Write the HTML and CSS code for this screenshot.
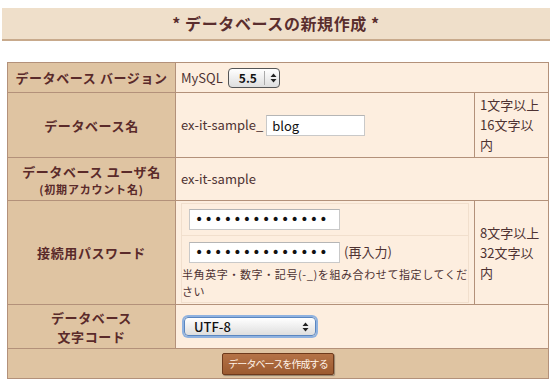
FILE: index.html
```html
<!DOCTYPE html>
<html lang="ja">
<head>
<meta charset="utf-8">
<link rel="stylesheet" href="styles.css">
</head>
<body>
<div class="page">
  <h1 class="title">* データベースの新規作成 *</h1>
  <table class="form">
    <colgroup><col class="c-label"><col class="c-value"><col class="c-note"></colgroup>
    <tr class="r-version">
      <th>データベース バージョン</th>
      <td colspan="2"><div class="line">MySQL <div class="select select-sm"><span>5.5</span><span class="sep"></span><svg class="arrows" width="7" height="10" viewBox="0 0 7 10"><path d="M3.5 0.5 L6.5 4 H0.5 Z M3.5 9.5 L6.5 6 H0.5 Z" fill="#222"/></svg></div></div></td>
    </tr>
    <tr class="r-name">
      <th>データベース名</th>
      <td><div class="line">ex-it-sample_ <input class="text" type="text" value="blog"></div></td>
      <td class="note">1文字以上<br>16文字以<br>内</td>
    </tr>
    <tr class="r-user">
      <th>データベース ユーザ名<div class="sub">(初期アカウント名)</div></th>
      <td colspan="2">ex-it-sample</td>
    </tr>
    <tr class="r-pass">
      <th>接続用パスワード</th>
      <td class="inner-cell">
        <div class="inner">
          <div class="inner-row first"><input class="text pw" type="password" value="abcdefghijklmn"></div>
          <div class="inner-row second">
            <div class="line"><input class="text pw" type="password" value="abcdefghijklmn"> (再入力)</div>
            <p class="hint">半角英字・数字・記号(-_)を組み合わせて指定してください</p>
          </div>
        </div>
      </td>
      <td class="note">8文字以上<br>32文字以<br>内</td>
    </tr>
    <tr class="r-charset">
      <th>データベース<br>文字コード</th>
      <td colspan="2"><div class="select select-lg"><span>UTF-8</span><svg class="arrows" width="7" height="10" viewBox="0 0 7 10"><path d="M3.5 0.5 L6.5 4 H0.5 Z M3.5 9.5 L6.5 6 H0.5 Z" fill="#222"/></svg></div></td>
    </tr>
    <tr class="r-submit">
      <td colspan="3" class="submit"><button class="btn" type="button">データベースを作成する</button></td>
    </tr>
  </table>
</div>
</body>
</html>
```
FILE: styles.css
```css
html, body { margin: 0; padding: 0; background: #ffffff; }
body {
  font-family: "Noto Sans CJK JP", "Noto Sans", sans-serif;
  font-size: 13px;
  color: #4e3232;
}
.page { padding-top: 8px; }
.title {
  margin: 0 0 0 2px;
  height: 31px;
  line-height: 31px;
  background: #efdfca;
  border-bottom: 2px solid #c8aa8c;
  text-align: center;
  font-size: 16px;
  font-weight: bold;
  color: #5a2e2e;
  letter-spacing: 0.6px;
}
.form {
  margin: 21px 0 0 7px;
  width: 541px;
  border-collapse: collapse;
  table-layout: fixed;
  border: 1px solid #b3917a;
}
.c-label { width: 168px; }
.c-value { width: 299px; }
.c-note { width: 74px; }
.form th, .form td {
  border: 1px solid #b3917a;
  padding: 0 5px;
  vertical-align: middle;
}
.form th {
  background: #dfc4a2;
  color: #5a2a2a;
  font-weight: bold;
  text-align: center;
  line-height: 19px;
  padding: 0 1px;
  letter-spacing: 0.6px;
}
.form td { background: #fdeedf; line-height: 20px; }
.sub { font-size: 11px; line-height: 16px; letter-spacing: 0.8px; }
.r-version { height: 30px; }
.r-name { height: 65px; }
.r-user { height: 43px; }
.r-pass { height: 104px; }
.r-charset { height: 44px; }
.r-submit { height: 30px; }
.line { display: flex; align-items: center; gap: 3px; }
.note { font-size: 13px; line-height: 20px; padding: 0 4px; }
.text {
  box-sizing: border-box;
  height: 21px;
  border: 1px solid #c9c9c9;
  border-top-color: #b5b5b5;
  background: #ffffff;
  font-family: "Noto Sans CJK JP", sans-serif;
  font-size: 13px;
  color: #111;
  padding: 0 5px;
  margin: 0;
  outline: none;
}
.r-name .text { width: 99px; }
.pw { width: 151px; font-size: 14px; letter-spacing: 1.3px; font-family: "DejaVu Sans", sans-serif; }
.select {
  box-sizing: border-box;
  display: inline-flex;
  align-items: center;
  border: 1px solid #555;
  border-radius: 4px;
  background: linear-gradient(#ffffff, #dedede);
  color: #111;
  font-size: 12px;
  font-weight: bold;
  height: 20px;
}
.select-sm { width: 52px; padding: 0 0 0 10px; margin-left: 2px; }
.select-sm .sep { width: 1px; align-self: stretch; background: #aaa; margin: 2px 5px 2px 7px; }
.select-lg {
  width: 132px;
  height: 19px;
  padding: 0 6px 0 9px;
  justify-content: space-between;
  border: 1px solid #5a86c0;
  box-shadow: 0 0 0 2px #8fb2e0;
  margin-left: 3px;
  font-size: 13px;
  font-weight: 500;
}
.inner-cell { padding: 2px 3px; }
.inner { border: 1px solid #f1dfcd; }
.inner-row { padding: 5px 7px; }
.inner-row.first { height: 21px; border-bottom: 1px solid #f1dfcd; }
.inner-row.second { padding: 6px 0 2px 7px; }
.second .line { gap: 4px; }
.hint { margin: 3px 0 0 -7px; font-size: 11px; line-height: 17px; letter-spacing: 0.6px; }
.submit { text-align: center; background: #dfc4a2 !important; padding: 0; }
.btn {
  font-family: "Noto Sans CJK JP", sans-serif;
  font-size: 10px;
  color: #fff3e8;
  background: linear-gradient(#b57347, #9c5a30);
  border: 1px solid #6e3a1c;
  border-radius: 2px;
  box-shadow: 1px 1px 1px rgba(0,0,0,0.35);
  height: 22px;
  width: 112px;
  padding: 0;
  letter-spacing: -0.9px;
  white-space: nowrap;
}
```
